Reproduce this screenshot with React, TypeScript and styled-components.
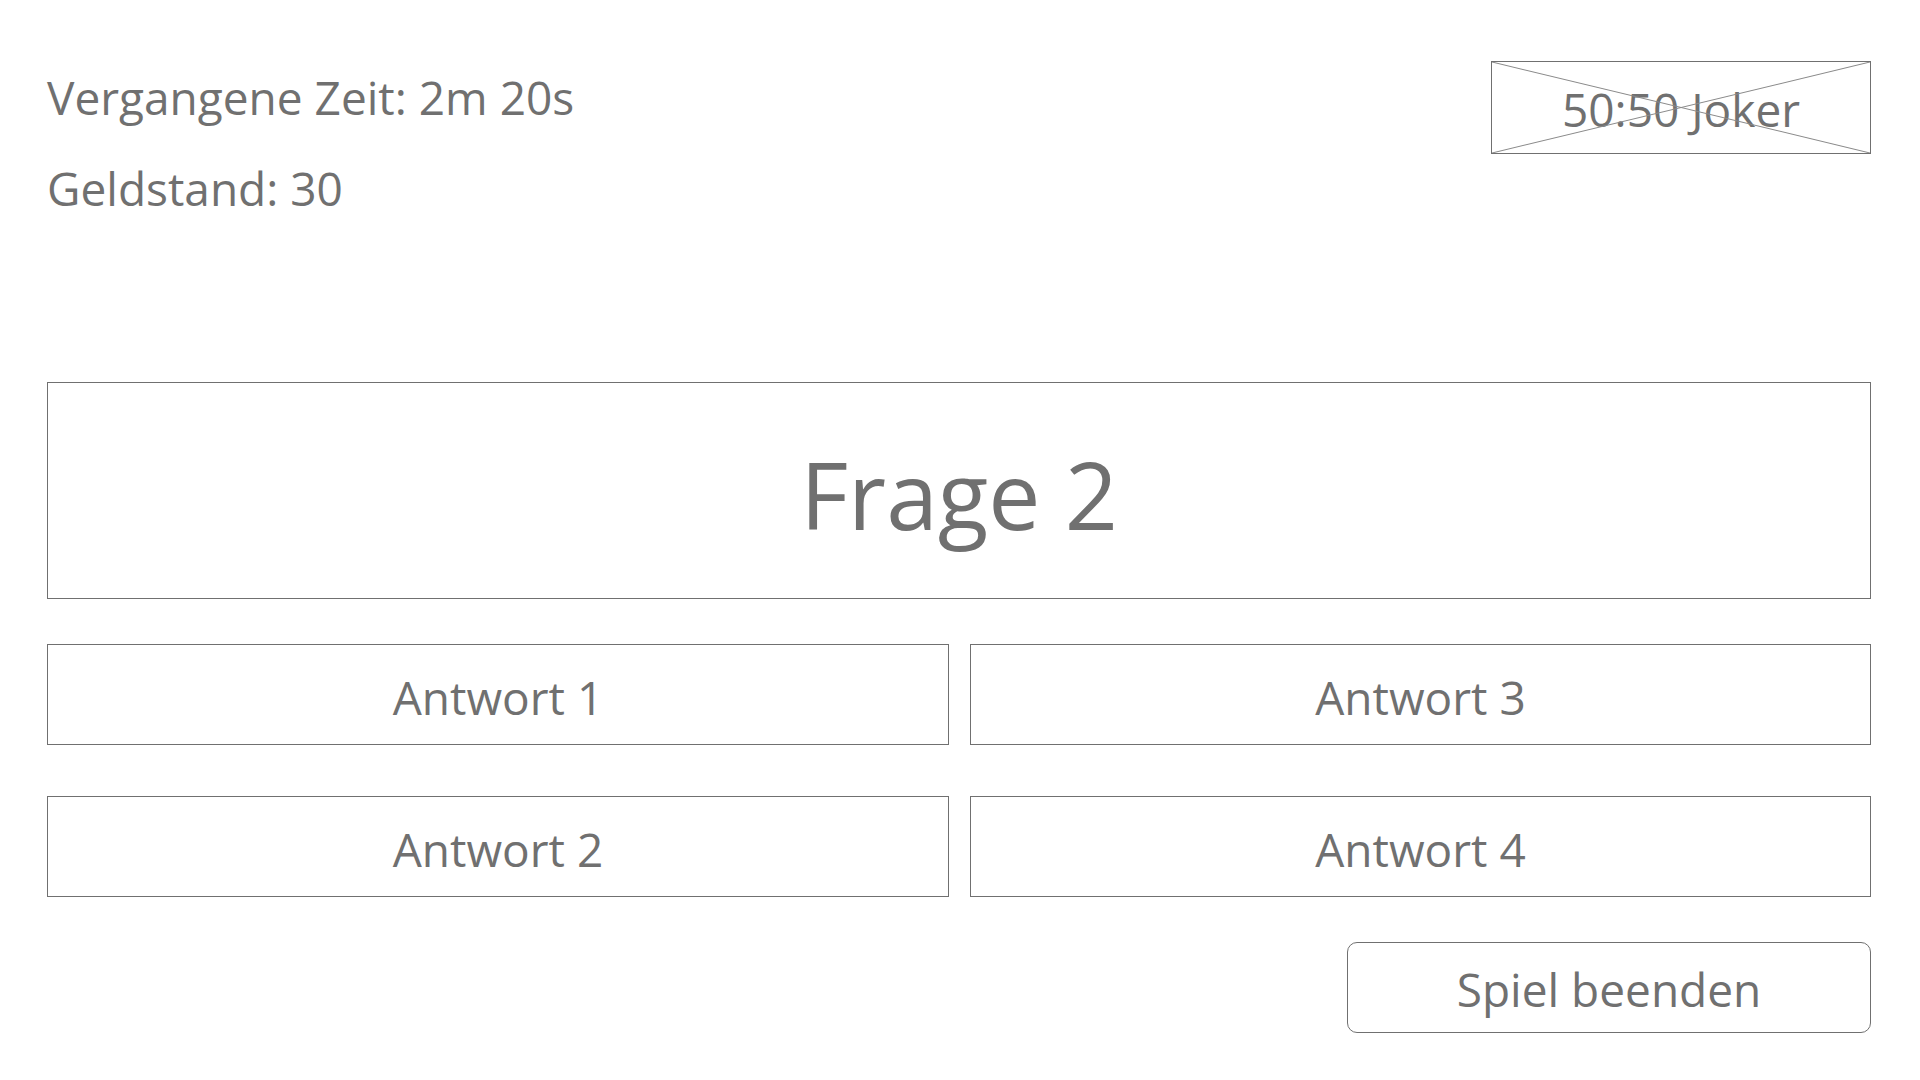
import React from "react";
import styled, { createGlobalStyle } from "styled-components";

const GlobalStyle = createGlobalStyle`
  html, body {
    margin: 0;
    padding: 0;
    background: #ffffff;
  }
  body {
    font-family: "Open Sans", "Noto Sans", "Liberation Sans", sans-serif;
    color: #707070;
  }
  * {
    box-sizing: border-box;
  }
`;

const Page = styled.div`
  width: 1920px;
  height: 1080px;
  padding: 52px 49px 0 47px;
  display: flex;
  flex-direction: column;
`;

const Header = styled.div`
  display: flex;
  justify-content: space-between;
  align-items: flex-start;
`;

const Info = styled.div`
  display: flex;
  flex-direction: column;
`;

const InfoLine = styled.div`
  font-size: 46px;
  line-height: 91px;
  white-space: nowrap;
`;

const JokerButton = styled.div`
  position: relative;
  margin-top: 9px;
  width: 380px;
  height: 93px;
  border: 1px solid #707070;
  display: flex;
  align-items: center;
  justify-content: center;
  font-size: 46px;
  padding-top: 3px;
`;

const Cross = styled.svg`
  position: absolute;
  inset: 0;
  width: 100%;
  height: 100%;
`;

const Question = styled.div`
  margin-top: 148px;
  height: 217px;
  border: 1px solid #707070;
  display: flex;
  align-items: center;
  justify-content: center;
  font-size: 93px;
  padding-top: 6px;
`;

const Answers = styled.div`
  margin-top: 45px;
  display: grid;
  grid-template-columns: 902px 901px;
  grid-auto-rows: 101px;
  column-gap: 21px;
  row-gap: 51px;
`;

const Answer = styled.div`
  border: 1px solid #707070;
  display: flex;
  align-items: center;
  justify-content: center;
  font-size: 46px;
  padding-top: 5px;
`;

const Footer = styled.div`
  margin-top: 45px;
  display: flex;
  justify-content: flex-end;
`;

const EndButton = styled.div`
  width: 524px;
  height: 91px;
  border: 1px solid #707070;
  border-radius: 10px;
  display: flex;
  align-items: center;
  justify-content: center;
  font-size: 46px;
  padding-top: 3px;
`;

const answers = ["Antwort 1", "Antwort 3", "Antwort 2", "Antwort 4"];

const App: React.FC = () => (
  <>
    <GlobalStyle />
    <Page>
      <Header>
        <Info>
          <InfoLine>Vergangene Zeit: 2m 20s</InfoLine>
          <InfoLine>Geldstand: 30</InfoLine>
        </Info>
        <JokerButton>
          <Cross viewBox="0 0 100 100" preserveAspectRatio="none">
            <line x1="0" y1="0" x2="100" y2="100" stroke="#8a8a8a" strokeWidth="1" vectorEffect="non-scaling-stroke" />
            <line x1="100" y1="0" x2="0" y2="100" stroke="#8a8a8a" strokeWidth="1" vectorEffect="non-scaling-stroke" />
          </Cross>
          50:50 Joker
        </JokerButton>
      </Header>
      <Question>Frage 2</Question>
      <Answers>
        {answers.map((a) => (
          <Answer key={a}>{a}</Answer>
        ))}
      </Answers>
      <Footer>
        <EndButton>Spiel beenden</EndButton>
      </Footer>
    </Page>
  </>
);

export default App;
